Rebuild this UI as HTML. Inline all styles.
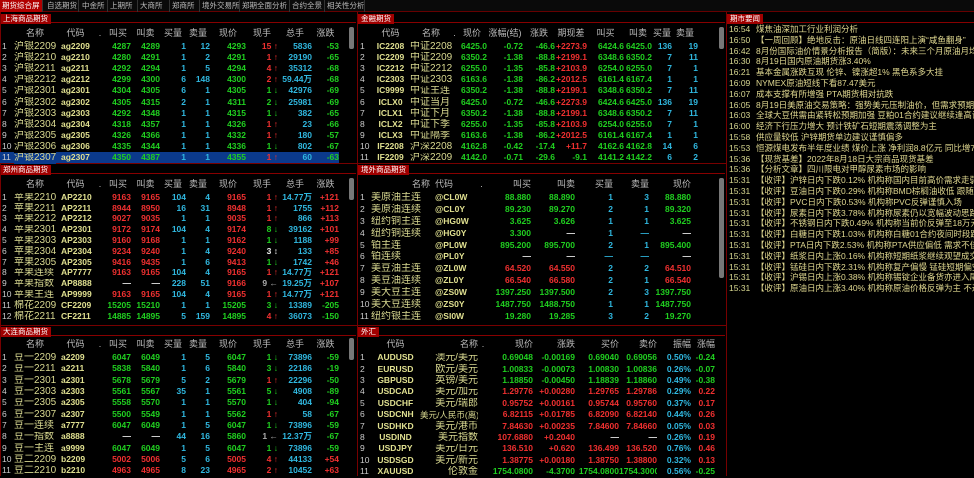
<!DOCTYPE html>
<html><head><meta charset="utf-8">
<style>
*{margin:0;padding:0;box-sizing:border-box}
body{width:974px;height:476px;background:#000;overflow:hidden;position:relative;font-family:"Liberation Sans","Noto Sans CJK SC",sans-serif;font-size:9px;color:#ccc}
.tabs{position:absolute;left:0;top:0;width:974px;height:12px;background:#0a0a0a;border-bottom:1px solid #600}
.tab{position:absolute;top:0;height:12px;line-height:12px;font-size:7.5px;color:#bbb;padding:0 2px;border-right:1px solid #333;overflow:hidden;white-space:nowrap}
.tab.on{background:#b00000;color:#fff}
.ph{position:absolute;height:10px;border-bottom:1px solid #800;}
.ph span{display:inline-block;background:#a00000;color:#fff;font-size:7.5px;line-height:10px;height:10px;padding:0 3px}
.vl{position:absolute;background:#700;width:1px}
.hl{position:absolute;background:#700;height:1px}
table{position:absolute;border-collapse:collapse;table-layout:fixed}
td{padding:0;white-space:nowrap;overflow:hidden;text-align:right;font-weight:bold;font-size:8.5px;line-height:10px}
tr.h td{color:#bbb;font-weight:normal;font-size:9px;text-align:center}
td.i{text-align:left;padding-left:2px;color:#ccc;font-weight:normal}
td.n{text-align:left;color:#d8d890;font-weight:normal;font-size:10px;position:relative;top:1px}
td.k{text-align:left;color:#e0e090;padding-left:5px}
td.kc{text-align:center;color:#e0e090}
td.nr{color:#d8d890;font-weight:normal;font-size:10px;position:relative;top:1px}
.g{color:#20d020}.r{color:#f03030}.c{color:#30b8e0}.w{color:#eee}.gr{color:#aaa}
.sb{position:absolute;width:5px;height:22px;background:#777;border-radius:2px}
.sel td{background:#0b3a8c}
.news{position:absolute;left:729px;top:24px;width:245px}
.news div{height:10.8px;line-height:10.8px;white-space:nowrap;overflow:hidden;color:#e0d890;font-size:8.5px}
.news b{display:inline-block;width:27px;font-weight:normal;color:#d8d890}
</style></head><body>
<div class="tabs">
<div class="tab on" style="left:0;width:43px">期货综合屏</div>
<div class="tab" style="left:45px;width:34px">自选期货</div>
<div class="tab" style="left:80px;width:28px">中金所</div>
<div class="tab" style="left:108px;width:30px">上期所</div>
<div class="tab" style="left:138px;width:32px">大商所</div>
<div class="tab" style="left:170px;width:30px">郑商所</div>
<div class="tab" style="left:200px;width:40px">境外交易所</div>
<div class="tab" style="left:240px;width:50px">郑期全面分析</div>
<div class="tab" style="left:290px;width:35px">合约全景</div>
<div class="tab" style="left:325px;width:40px">相关性分析</div>
</div>

<div class="ph" style="left:0;top:13px;width:356px"><span>上海商品期货</span></div>
<div class="ph" style="left:358px;top:13px;width:367px"><span>金融期货</span></div>
<div class="ph" style="left:727px;top:13px;width:247px"><span>期市要闻</span></div>
<div class="ph" style="left:0;top:164px;width:356px"><span>郑州商品期货</span></div>
<div class="ph" style="left:358px;top:164px;width:367px"><span>境外商品期货</span></div>
<div class="ph" style="left:0;top:326px;width:356px"><span>大连商品期货</span></div>
<div class="ph" style="left:358px;top:326px;width:367px"><span>外汇</span></div>
<div class="vl" style="left:357px;top:12px;height:464px"></div>
<div class="vl" style="left:726px;top:12px;height:464px"></div>
<div class="vl" style="left:0;top:12px;height:464px"></div>
<div class="hl" style="left:0;top:163px;width:726px"></div>
<div class="hl" style="left:0;top:325px;width:726px"></div>
<div class="sb" style="left:349px;top:27px"></div>
<div class="sb" style="left:719px;top:27px"></div>
<div class="sb" style="left:349px;top:178px"></div>
<div class="sb" style="left:719px;top:178px;height:100px"></div>
<div class="sb" style="left:349px;top:338px"></div>

<!-- 上海 -->
<table style="left:0;top:26px;width:339px">
<colgroup><col style="width:14px"><col style="width:42px"><col style="width:39px"><col style="width:10px"><col style="width:26px"><col style="width:29px"><col style="width:26px"><col style="width:24px"><col style="width:36px"><col style="width:32px"><col style="width:34px"><col style="width:27px"></colgroup>
<tr class="h" style="height:14px"><td></td><td>名称</td><td>代码</td><td>.</td><td>叫买</td><td>叫卖</td><td>买量</td><td>卖量</td><td>现价</td><td>现手</td><td>总手</td><td>涨跌</td></tr>
<tr style="height:11.2px"><td class="i">1</td><td class="n">沪银2209</td><td class="k">ag2209</td><td></td><td class="g">4287</td><td class="g">4289</td><td class="c">1</td><td class="c">12</td><td class="g">4293</td><td class="r">15 ↑</td><td class="c">5836</td><td class="g">-53</td></tr>
<tr style="height:11.2px"><td class="i">2</td><td class="n">沪银2210</td><td class="k">ag2210</td><td></td><td class="g">4280</td><td class="g">4291</td><td class="c">1</td><td class="c">2</td><td class="g">4291</td><td class="r">1 ↑</td><td class="c">29190</td><td class="g">-65</td></tr>
<tr style="height:11.2px"><td class="i">3</td><td class="n">沪银2211</td><td class="k">ag2211</td><td></td><td class="g">4292</td><td class="g">4294</td><td class="c">1</td><td class="c">5</td><td class="g">4294</td><td class="r">4 ↑</td><td class="c">35312</td><td class="g">-68</td></tr>
<tr style="height:11.2px"><td class="i">4</td><td class="n">沪银2212</td><td class="k">ag2212</td><td></td><td class="g">4299</td><td class="g">4300</td><td class="c">6</td><td class="c">148</td><td class="g">4300</td><td class="r">2 ↑</td><td class="c">59.44万</td><td class="g">-68</td></tr>
<tr style="height:11.2px"><td class="i">5</td><td class="n">沪银2301</td><td class="k">ag2301</td><td></td><td class="g">4304</td><td class="g">4305</td><td class="c">6</td><td class="c">1</td><td class="g">4305</td><td class="g">1 ↓</td><td class="c">42976</td><td class="g">-69</td></tr>
<tr style="height:11.2px"><td class="i">6</td><td class="n">沪银2302</td><td class="k">ag2302</td><td></td><td class="g">4305</td><td class="g">4315</td><td class="c">2</td><td class="c">1</td><td class="g">4311</td><td class="g">2 ↓</td><td class="c">25981</td><td class="g">-69</td></tr>
<tr style="height:11.2px"><td class="i">7</td><td class="n">沪银2303</td><td class="k">ag2303</td><td></td><td class="g">4292</td><td class="g">4348</td><td class="c">1</td><td class="c">1</td><td class="g">4315</td><td class="g">1 ↓</td><td class="c">382</td><td class="g">-65</td></tr>
<tr style="height:11.2px"><td class="i">8</td><td class="n">沪银2304</td><td class="k">ag2304</td><td></td><td class="g">4318</td><td class="g">4357</td><td class="c">1</td><td class="c">1</td><td class="g">4326</td><td class="r">1 ↑</td><td class="c">23</td><td class="g">-66</td></tr>
<tr style="height:11.2px"><td class="i">9</td><td class="n">沪银2305</td><td class="k">ag2305</td><td></td><td class="g">4326</td><td class="g">4366</td><td class="c">1</td><td class="c">1</td><td class="g">4332</td><td class="r">1 ↑</td><td class="c">180</td><td class="g">-57</td></tr>
<tr style="height:11.2px"><td class="i">10</td><td class="n">沪银2306</td><td class="k">ag2306</td><td></td><td class="g">4335</td><td class="g">4344</td><td class="c">1</td><td class="c">1</td><td class="g">4336</td><td class="g">1 ↓</td><td class="c">802</td><td class="g">-67</td></tr>
<tr class="sel" style="height:11.2px"><td class="i">11</td><td class="n">沪银2307</td><td class="k">ag2307</td><td></td><td class="g">4350</td><td class="g">4387</td><td class="c">1</td><td class="c">1</td><td class="g">4355</td><td class="r">1 ↑</td><td class="c">60</td><td class="g">-63</td></tr>
</table>

<!-- 郑州 -->
<table style="left:0;top:176px;width:339px">
<colgroup><col style="width:14px"><col style="width:42px"><col style="width:39px"><col style="width:10px"><col style="width:26px"><col style="width:29px"><col style="width:26px"><col style="width:24px"><col style="width:36px"><col style="width:32px"><col style="width:34px"><col style="width:27px"></colgroup>
<tr class="h" style="height:15.5px"><td></td><td>名称</td><td>代码</td><td>.</td><td>叫买</td><td>叫卖</td><td>买量</td><td>卖量</td><td>现价</td><td>现手</td><td>总手</td><td>涨跌</td></tr>
<tr style="height:10.8px"><td class="i">1</td><td class="n">苹果2210</td><td class="k">AP2210</td><td></td><td class="r">9163</td><td class="r">9165</td><td class="c">104</td><td class="c">4</td><td class="r">9165</td><td class="r">1 ↑</td><td class="c">14.77万</td><td class="r">+121</td></tr>
<tr style="height:10.8px"><td class="i">2</td><td class="n">苹果2211</td><td class="k">AP2211</td><td></td><td class="r">8944</td><td class="r">8950</td><td class="c">16</td><td class="c">31</td><td class="r">8948</td><td class="r">1 ↑</td><td class="c">1755</td><td class="r">+112</td></tr>
<tr style="height:10.8px"><td class="i">3</td><td class="n">苹果2212</td><td class="k">AP2212</td><td></td><td class="r">9027</td><td class="r">9035</td><td class="c">1</td><td class="c">1</td><td class="r">9035</td><td class="r">1 ↑</td><td class="c">866</td><td class="r">+113</td></tr>
<tr style="height:10.8px"><td class="i">4</td><td class="n">苹果2301</td><td class="k">AP2301</td><td></td><td class="r">9172</td><td class="r">9174</td><td class="c">104</td><td class="c">4</td><td class="r">9174</td><td class="g">8 ↓</td><td class="c">39162</td><td class="r">+101</td></tr>
<tr style="height:10.8px"><td class="i">5</td><td class="n">苹果2303</td><td class="k">AP2303</td><td></td><td class="r">9160</td><td class="r">9168</td><td class="c">1</td><td class="c">1</td><td class="r">9162</td><td class="g">1 ↓</td><td class="c">1188</td><td class="r">+99</td></tr>
<tr style="height:10.8px"><td class="i">6</td><td class="n">苹果2304</td><td class="k">AP2304</td><td></td><td class="r">9234</td><td class="r">9240</td><td class="c">1</td><td class="c">4</td><td class="r">9240</td><td class="w">3 ↕</td><td class="c">133</td><td class="r">+85</td></tr>
<tr style="height:10.8px"><td class="i">7</td><td class="n">苹果2305</td><td class="k">AP2305</td><td></td><td class="r">9416</td><td class="r">9435</td><td class="c">1</td><td class="c">6</td><td class="r">9413</td><td class="g">1 ↓</td><td class="c">1742</td><td class="r">+46</td></tr>
<tr style="height:10.8px"><td class="i">8</td><td class="n">苹果连续</td><td class="k">AP7777</td><td></td><td class="r">9163</td><td class="r">9165</td><td class="c">104</td><td class="c">4</td><td class="r">9165</td><td class="r">1 ↑</td><td class="c">14.77万</td><td class="r">+121</td></tr>
<tr style="height:10.8px"><td class="i">9</td><td class="n">苹果指数</td><td class="k">AP8888</td><td></td><td class="w">—</td><td class="w">—</td><td class="c">228</td><td class="c">51</td><td class="r">9166</td><td class="gr">9 ←</td><td class="c">19.25万</td><td class="r">+107</td></tr>
<tr style="height:10.8px"><td class="i">10</td><td class="n">苹果主连</td><td class="k">AP9999</td><td></td><td class="r">9163</td><td class="r">9165</td><td class="c">104</td><td class="c">4</td><td class="r">9165</td><td class="r">1 ↑</td><td class="c">14.77万</td><td class="r">+121</td></tr>
<tr style="height:10.8px"><td class="i">11</td><td class="n">棉花2209</td><td class="k">CF2209</td><td></td><td class="g">15205</td><td class="g">15210</td><td class="c">1</td><td class="c">1</td><td class="g">15205</td><td class="g">3 ↓</td><td class="c">13389</td><td class="g">-205</td></tr>
<tr style="height:10.8px"><td class="i">12</td><td class="n">棉花2211</td><td class="k">CF2211</td><td></td><td class="g">14885</td><td class="g">14895</td><td class="c">5</td><td class="c">159</td><td class="g">14895</td><td class="r">4 ↑</td><td class="c">36073</td><td class="g">-150</td></tr>
</table>

<!-- 大连 -->
<table style="left:0;top:336px;width:339px">
<colgroup><col style="width:14px"><col style="width:42px"><col style="width:39px"><col style="width:10px"><col style="width:26px"><col style="width:29px"><col style="width:26px"><col style="width:24px"><col style="width:36px"><col style="width:32px"><col style="width:34px"><col style="width:27px"></colgroup>
<tr class="h" style="height:15.5px"><td></td><td>名称</td><td>代码</td><td>.</td><td>叫买</td><td>叫卖</td><td>买量</td><td>卖量</td><td>现价</td><td>现手</td><td>总手</td><td>涨跌</td></tr>
<tr style="height:11.3px"><td class="i">1</td><td class="n">豆一2209</td><td class="k">a2209</td><td></td><td class="g">6047</td><td class="g">6049</td><td class="c">1</td><td class="c">5</td><td class="g">6047</td><td class="g">1 ↓</td><td class="c">73896</td><td class="g">-59</td></tr>
<tr style="height:11.3px"><td class="i">2</td><td class="n">豆一2211</td><td class="k">a2211</td><td></td><td class="g">5838</td><td class="g">5840</td><td class="c">1</td><td class="c">6</td><td class="g">5840</td><td class="g">3 ↓</td><td class="c">22186</td><td class="g">-19</td></tr>
<tr style="height:11.3px"><td class="i">3</td><td class="n">豆一2301</td><td class="k">a2301</td><td></td><td class="g">5678</td><td class="g">5679</td><td class="c">5</td><td class="c">2</td><td class="g">5679</td><td class="r">1 ↑</td><td class="c">22296</td><td class="g">-50</td></tr>
<tr style="height:11.3px"><td class="i">4</td><td class="n">豆一2303</td><td class="k">a2303</td><td></td><td class="g">5561</td><td class="g">5567</td><td class="c">35</td><td class="c">1</td><td class="g">5561</td><td class="g">5 ↓</td><td class="c">4908</td><td class="g">-89</td></tr>
<tr style="height:11.3px"><td class="i">5</td><td class="n">豆一2305</td><td class="k">a2305</td><td></td><td class="g">5558</td><td class="g">5570</td><td class="c">1</td><td class="c">1</td><td class="g">5570</td><td class="g">1 ↓</td><td class="c">404</td><td class="g">-94</td></tr>
<tr style="height:11.3px"><td class="i">6</td><td class="n">豆一2307</td><td class="k">a2307</td><td></td><td class="g">5500</td><td class="g">5549</td><td class="c">1</td><td class="c">1</td><td class="g">5562</td><td class="r">1 ↑</td><td class="c">58</td><td class="g">-67</td></tr>
<tr style="height:11.3px"><td class="i">7</td><td class="n">豆一连续</td><td class="k">a7777</td><td></td><td class="g">6047</td><td class="g">6049</td><td class="c">1</td><td class="c">5</td><td class="g">6047</td><td class="g">1 ↓</td><td class="c">73896</td><td class="g">-59</td></tr>
<tr style="height:11.3px"><td class="i">8</td><td class="n">豆一指数</td><td class="k">a8888</td><td></td><td class="w">—</td><td class="w">—</td><td class="c">44</td><td class="c">16</td><td class="g">5860</td><td class="gr">1 ←</td><td class="c">12.37万</td><td class="g">-67</td></tr>
<tr style="height:11.3px"><td class="i">9</td><td class="n">豆一主连</td><td class="k">a9999</td><td></td><td class="g">6047</td><td class="g">6049</td><td class="c">1</td><td class="c">5</td><td class="g">6047</td><td class="g">1 ↓</td><td class="c">73896</td><td class="g">-59</td></tr>
<tr style="height:11.3px"><td class="i">10</td><td class="n">豆二2209</td><td class="k">b2209</td><td></td><td class="r">5002</td><td class="r">5006</td><td class="c">5</td><td class="c">6</td><td class="r">5005</td><td class="r">4 ↑</td><td class="c">44133</td><td class="r">+54</td></tr>
<tr style="height:11.3px"><td class="i">11</td><td class="n">豆二2210</td><td class="k">b2210</td><td></td><td class="r">4963</td><td class="r">4965</td><td class="c">8</td><td class="c">23</td><td class="r">4965</td><td class="r">2 ↑</td><td class="c">10452</td><td class="r">+63</td></tr>
</table>

<!-- 金融 -->
<table style="left:358px;top:26px;width:340px">
<colgroup><col style="width:13px"><col style="width:39px"><col style="width:42px"><col style="width:5px"><col style="width:30px"><col style="width:36px"><col style="width:32px"><col style="width:32px"><col style="width:37px"><col style="width:28px"><col style="width:20px"><col style="width:26px"></colgroup>
<tr class="h" style="height:14px"><td></td><td>代码</td><td>名称</td><td>.</td><td>现价</td><td>涨幅(结)</td><td>涨跌</td><td>期现差</td><td>叫买</td><td>叫卖</td><td>买量</td><td>卖量</td></tr>
<tr style="height:11.2px"><td class="i">1</td><td class="kc">IC2208</td><td class="n">中证2208</td><td></td><td class="g">6425.0</td><td class="g">-0.72</td><td class="g">-46.6</td><td class="r">+2273.9</td><td class="g">6424.6</td><td class="g">6425.0</td><td class="c">136</td><td class="c">19</td></tr>
<tr style="height:11.2px"><td class="i">2</td><td class="kc">IC2209</td><td class="n">中证2209</td><td></td><td class="g">6350.2</td><td class="g">-1.38</td><td class="g">-88.8</td><td class="r">+2199.1</td><td class="g">6348.6</td><td class="g">6350.2</td><td class="c">7</td><td class="c">11</td></tr>
<tr style="height:11.2px"><td class="i">3</td><td class="kc">IC2212</td><td class="n">中证2212</td><td></td><td class="g">6255.0</td><td class="g">-1.35</td><td class="g">-85.8</td><td class="r">+2103.9</td><td class="g">6254.0</td><td class="g">6255.0</td><td class="c">7</td><td class="c">1</td></tr>
<tr style="height:11.2px"><td class="i">4</td><td class="kc">IC2303</td><td class="n">中证2303</td><td></td><td class="g">6163.6</td><td class="g">-1.38</td><td class="g">-86.2</td><td class="r">+2012.5</td><td class="g">6161.4</td><td class="g">6167.4</td><td class="c">1</td><td class="c">1</td></tr>
<tr style="height:11.2px"><td class="i">5</td><td class="kc">IC9999</td><td class="n">中证主连</td><td></td><td class="g">6350.2</td><td class="g">-1.38</td><td class="g">-88.8</td><td class="r">+2199.1</td><td class="g">6348.6</td><td class="g">6350.2</td><td class="c">7</td><td class="c">11</td></tr>
<tr style="height:11.2px"><td class="i">6</td><td class="kc">ICLX0</td><td class="n">中证当月</td><td></td><td class="g">6425.0</td><td class="g">-0.72</td><td class="g">-46.6</td><td class="r">+2273.9</td><td class="g">6424.6</td><td class="g">6425.0</td><td class="c">136</td><td class="c">19</td></tr>
<tr style="height:11.2px"><td class="i">7</td><td class="kc">ICLX1</td><td class="n">中证下月</td><td></td><td class="g">6350.2</td><td class="g">-1.38</td><td class="g">-88.8</td><td class="r">+2199.1</td><td class="g">6348.6</td><td class="g">6350.2</td><td class="c">7</td><td class="c">11</td></tr>
<tr style="height:11.2px"><td class="i">8</td><td class="kc">ICLX2</td><td class="n">中证下季</td><td></td><td class="g">6255.0</td><td class="g">-1.35</td><td class="g">-85.8</td><td class="r">+2103.9</td><td class="g">6254.0</td><td class="g">6255.0</td><td class="c">7</td><td class="c">1</td></tr>
<tr style="height:11.2px"><td class="i">9</td><td class="kc">ICLX3</td><td class="n">中证隔季</td><td></td><td class="g">6163.6</td><td class="g">-1.38</td><td class="g">-86.2</td><td class="r">+2012.5</td><td class="g">6161.4</td><td class="g">6167.4</td><td class="c">1</td><td class="c">1</td></tr>
<tr style="height:11.2px"><td class="i">10</td><td class="kc">IF2208</td><td class="n">沪深2208</td><td></td><td class="g">4162.8</td><td class="g">-0.42</td><td class="g">-17.4</td><td class="r">+11.7</td><td class="g">4162.6</td><td class="g">4162.8</td><td class="c">14</td><td class="c">6</td></tr>
<tr style="height:11.2px"><td class="i">11</td><td class="kc">IF2209</td><td class="n">沪深2209</td><td></td><td class="g">4142.0</td><td class="g">-0.71</td><td class="g">-29.6</td><td class="g">-9.1</td><td class="g">4141.2</td><td class="g">4142.2</td><td class="c">6</td><td class="c">2</td></tr>
</table>

<!-- 境外 -->
<table style="left:358px;top:176px;width:333px">
<colgroup><col style="width:13px"><col style="width:59px"><col style="width:45px"><col style="width:13px"><col style="width:43px"><col style="width:44px"><col style="width:38px"><col style="width:36px"><col style="width:42px"></colgroup>
<tr class="h" style="height:15px"><td></td><td style="text-align:right">名称</td><td style="text-align:left;padding-left:5px">代码</td><td>.</td><td style="text-align:right">叫买</td><td style="text-align:right">叫卖</td><td style="text-align:right">买量</td><td style="text-align:right">卖量</td><td style="text-align:right">现价</td></tr>
<tr style="height:11.9px"><td class="i">1</td><td class="n">美原油主连</td><td class="k">@CL0W</td><td></td><td class="g">88.880</td><td class="g">88.890</td><td class="c">1</td><td class="c">3</td><td class="g">88.880</td></tr>
<tr style="height:11.9px"><td class="i">2</td><td class="n">美原油连续</td><td class="k">@CL0Y</td><td></td><td class="g">89.230</td><td class="g">89.270</td><td class="c">2</td><td class="c">1</td><td class="g">89.320</td></tr>
<tr style="height:11.9px"><td class="i">3</td><td class="n">纽约铜主连</td><td class="k">@HG0W</td><td></td><td class="g">3.625</td><td class="g">3.626</td><td class="c">1</td><td class="c">1</td><td class="g">3.625</td></tr>
<tr style="height:11.9px"><td class="i">4</td><td class="n">纽约铜连续</td><td class="k">@HG0Y</td><td></td><td class="g">3.300</td><td class="w">—</td><td class="c">1</td><td class="c">—</td><td class="w">—</td></tr>
<tr style="height:11.9px"><td class="i">5</td><td class="n">铂主连</td><td class="k">@PL0W</td><td></td><td class="g">895.200</td><td class="g">895.700</td><td class="c">2</td><td class="c">1</td><td class="g">895.400</td></tr>
<tr style="height:11.9px"><td class="i">6</td><td class="n">铂连续</td><td class="k">@PL0Y</td><td></td><td class="w">—</td><td class="w">—</td><td class="c">—</td><td class="c">—</td><td class="w">—</td></tr>
<tr style="height:11.9px"><td class="i">7</td><td class="n">美豆油主连</td><td class="k">@ZL0W</td><td></td><td class="r">64.520</td><td class="r">64.550</td><td class="c">2</td><td class="c">2</td><td class="r">64.510</td></tr>
<tr style="height:11.9px"><td class="i">8</td><td class="n">美豆油连续</td><td class="k">@ZL0Y</td><td></td><td class="r">66.540</td><td class="r">66.580</td><td class="c">2</td><td class="c">1</td><td class="r">66.540</td></tr>
<tr style="height:11.9px"><td class="i">9</td><td class="n">美大豆主连</td><td class="k">@ZS0W</td><td></td><td class="g">1397.250</td><td class="g">1397.500</td><td class="c">2</td><td class="c">3</td><td class="g">1397.750</td></tr>
<tr style="height:11.9px"><td class="i">10</td><td class="n">美大豆连续</td><td class="k">@ZS0Y</td><td></td><td class="g">1487.750</td><td class="g">1488.750</td><td class="c">1</td><td class="c">1</td><td class="g">1487.750</td></tr>
<tr style="height:11.9px"><td class="i">11</td><td class="n">纽约银主连</td><td class="k">@SI0W</td><td></td><td class="g">19.280</td><td class="g">19.285</td><td class="c">3</td><td class="c">2</td><td class="g">19.270</td></tr>
</table>

<!-- 外汇 -->
<table style="left:358px;top:336px;width:357px">
<colgroup><col style="width:13px"><col style="width:49px"><col style="width:58px"><col style="width:10px"><col style="width:45px"><col style="width:42px"><col style="width:44px"><col style="width:38px"><col style="width:34px"><col style="width:24px"></colgroup>
<tr class="h" style="height:15.5px"><td></td><td>代码</td><td style="text-align:right">名称</td><td>.</td><td style="text-align:right">现价</td><td style="text-align:right">涨跌</td><td style="text-align:right">买价</td><td style="text-align:right">卖价</td><td style="text-align:right">振幅</td><td style="text-align:right">涨幅</td></tr>
<tr style="height:11.4px"><td class="i">1</td><td class="kc">AUDUSD</td><td class="nr">澳元/美元</td><td></td><td class="g">0.69048</td><td class="g">-0.00169</td><td class="g">0.69040</td><td class="g">0.69056</td><td class="c">0.50%</td><td class="g">-0.24</td></tr>
<tr style="height:11.4px"><td class="i">2</td><td class="kc">EURUSD</td><td class="nr">欧元/美元</td><td></td><td class="g">1.00833</td><td class="g">-0.00073</td><td class="g">1.00830</td><td class="g">1.00836</td><td class="c">0.26%</td><td class="g">-0.07</td></tr>
<tr style="height:11.4px"><td class="i">3</td><td class="kc">GBPUSD</td><td class="nr">英镑/美元</td><td></td><td class="g">1.18850</td><td class="g">-0.00450</td><td class="g">1.18839</td><td class="g">1.18860</td><td class="c">0.49%</td><td class="g">-0.38</td></tr>
<tr style="height:11.4px"><td class="i">4</td><td class="kc">USDCAD</td><td class="nr">美元/加元</td><td></td><td class="r">1.29776</td><td class="r">+0.00280</td><td class="r">1.29765</td><td class="r">1.29786</td><td class="c">0.29%</td><td class="r">0.22</td></tr>
<tr style="height:11.4px"><td class="i">5</td><td class="kc">USDCHF</td><td class="nr">美元/瑞郎</td><td></td><td class="r">0.95752</td><td class="r">+0.00161</td><td class="r">0.95744</td><td class="r">0.95760</td><td class="c">0.37%</td><td class="r">0.17</td></tr>
<tr style="height:11.4px"><td class="i">6</td><td class="kc">USDCNH</td><td class="nr" style="font-size:8.5px">美元/人民币(离)</td><td></td><td class="r">6.82115</td><td class="r">+0.01785</td><td class="r">6.82090</td><td class="r">6.82140</td><td class="c">0.44%</td><td class="r">0.26</td></tr>
<tr style="height:11.4px"><td class="i">7</td><td class="kc">USDHKD</td><td class="nr">美元/港币</td><td></td><td class="r">7.84630</td><td class="r">+0.00235</td><td class="r">7.84600</td><td class="r">7.84660</td><td class="c">0.05%</td><td class="r">0.03</td></tr>
<tr style="height:11.4px"><td class="i">8</td><td class="kc">USDIND</td><td class="nr">美元指数</td><td></td><td class="r">107.6880</td><td class="r">+0.2040</td><td class="w">—</td><td class="w">—</td><td class="c">0.26%</td><td class="r">0.19</td></tr>
<tr style="height:11.4px"><td class="i">9</td><td class="kc">USDJPY</td><td class="nr">美元/日元</td><td></td><td class="r">136.510</td><td class="r">+0.620</td><td class="r">136.499</td><td class="r">136.520</td><td class="c">0.76%</td><td class="r">0.46</td></tr>
<tr style="height:11.4px"><td class="i">10</td><td class="kc">USDSGD</td><td class="nr">美元/新元</td><td></td><td class="r">1.38775</td><td class="r">+0.00180</td><td class="r">1.38750</td><td class="r">1.38800</td><td class="c">0.32%</td><td class="r">0.13</td></tr>
<tr style="height:11.4px"><td class="i">11</td><td class="kc">XAUUSD</td><td class="nr">伦敦金</td><td></td><td class="g">1754.0800</td><td class="g">-4.3700</td><td class="g">1754.0800</td><td class="g">1754.3000</td><td class="c">0.56%</td><td class="g">-0.25</td></tr>
</table>

<div class="news">
<div><b>16:54</b>煤焦油深加工行业利润分析</div>
<div><b>16:50</b>【一周回顾】绝地反击：原油日线四连阳上演“咸鱼翻身”</div>
<div><b>16:42</b>8月份国际油价情景分析报告（简版）：未来三个月原油月均价...</div>
<div><b>16:30</b>8月19日国内原油期货涨3.40%</div>
<div><b>16:21</b>基本金属涨跌互现 伦锌、镍涨超1% 黑色系多大挂</div>
<div><b>16:09</b>NYMEX原油短线下看87.47美元</div>
<div><b>16:07</b>成本支撑有所增强 PTA期货相对抗跌</div>
<div><b>16:05</b>8月19日美原油交易策略：强势美元压制油价，但需求预期改善...</div>
<div><b>16:03</b>全球大豆供需由紧转松预期加强 豆粕01合约建议继续逢高试空</div>
<div><b>16:00</b>经济下行压力增大 预计铁矿石短期震荡调整为主</div>
<div><b>15:58</b>供应量较低 沪锌期货单边建议谨慎偏多</div>
<div><b>15:53</b>恒源煤电发布半年度业绩 煤价上涨 净利润8.8亿元 同比增78....</div>
<div><b>15:36</b>【现货基差】2022年8月18日大宗商品现货基差</div>
<div><b>15:36</b>【分析文章】四川限电对甲醇尿素市场的影响</div>
<div><b>15:31</b>【收评】沪锌日内下跌0.12% 机构称国内目前高价需求走弱 但...</div>
<div><b>15:31</b>【收评】豆油日内下跌0.29% 机构称BMD棕榈油收低 跟随其他...</div>
<div><b>15:31</b>【收评】PVC日内下跌0.53% 机构称PVC反弹谨慎入场</div>
<div><b>15:31</b>【收评】尿素日内下跌3.78% 机构称尿素仍以宽幅波动思路对...</div>
<div><b>15:31</b>【收评】不锈钢日内下跌0.49% 机构称当前价反弹至18万元/吨...</div>
<div><b>15:31</b>【收评】白糖日内下跌1.03% 机构称白糖01合约夜间时段跌破5...</div>
<div><b>15:31</b>【收评】PTA日内下跌2.53% 机构称PTA供应偏低 需求不佳 预...</div>
<div><b>15:31</b>【收评】纸浆日内上涨0.16% 机构称短期纸浆继续观望成交动...</div>
<div><b>15:31</b>【收评】锰硅日内下跌2.31% 机构称复产偏慢 锰硅短期偏空</div>
<div><b>15:31</b>【收评】沪锡日内上涨0.38% 机构称锡锭企业备货亦进入尾声 ...</div>
<div><b>15:31</b>【收评】原油日内上涨3.40% 机构称原油价格反弹为主 不过仍...</div>
</div>
</body></html>
